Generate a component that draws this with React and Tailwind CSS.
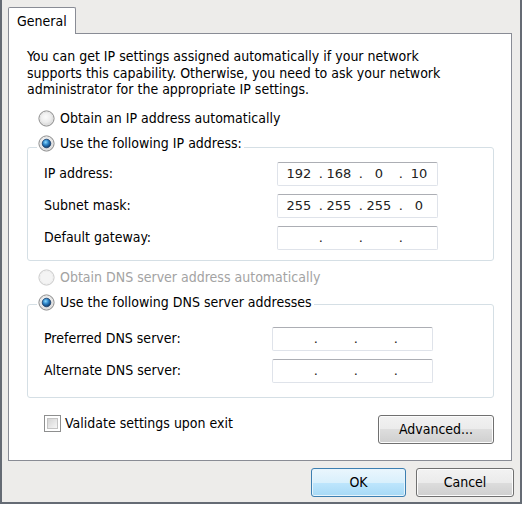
import React from "react";

const font = { fontFamily: '"DejaVu Sans Condensed", "DejaVu Sans", Tahoma, sans-serif' };

const Radio = ({ checked, disabled }) => (
  <svg width="17" height="17" viewBox="0 0 17 17" className="shrink-0">
    <defs>
      <radialGradient id="radioFill" cx="0.45" cy="0.4" r="0.6">
        <stop offset="0" stopColor="#fbfbfb" />
        <stop offset="0.6" stopColor="#ececec" />
        <stop offset="1" stopColor="#cfcfcf" />
      </radialGradient>
      <radialGradient id="radioDot" cx="0.4" cy="0.35" r="0.7">
        <stop offset="0" stopColor="#8fdcff" />
        <stop offset="0.45" stopColor="#2c84c8" />
        <stop offset="1" stopColor="#0b2f5c" />
      </radialGradient>
    </defs>
    <circle cx="8.5" cy="8.5" r="7.6" fill={disabled ? "#f4f4f4" : "url(#radioFill)"} stroke={disabled ? "#c9c9c9" : "#8c8c8c"} strokeWidth="1" />
    <circle cx="8.5" cy="8.5" r="6.4" fill="none" stroke={disabled ? "#ececec" : "#e2e2e2"} strokeWidth="0.8" />
    {checked && <circle cx="8.5" cy="8.5" r="4.3" fill="url(#radioDot)" stroke="#163a66" strokeWidth="0.8" />}
  </svg>
);

// IP address control: four centred octets with dots between them
const IpBox = ({ parts = ["", "", "", ""] }) => (
  <div
    className="w-[161px] h-[24px] bg-white border border-[#dfe3ea] border-t-[#acaeb4] rounded-[2px] flex items-center pl-[5px] text-[13px] text-[#222]"
    style={{ fontFamily: '"DejaVu Sans", sans-serif' }}
  >
    {parts.map((p, i) => (
      <React.Fragment key={i}>
        <span className="w-[32px] text-center">{p}</span>
        {i < 3 && <span className="w-[8px] text-right">.</span>}
      </React.Fragment>
    ))}
  </div>
);

const Field = ({ label, parts, labelWidth }) => (
  <div className="flex items-center h-[24px]">
    <span className={labelWidth}>{label}</span>
    <IpBox parts={parts} />
  </div>
);

const Button = ({ children, primary, className = "" }) => (
  <button
    className={`h-[29px] rounded-[3px] border text-[14px] text-black ${
      primary
        ? "border-[#3c7fb1] bg-[linear-gradient(#eaf6fd_0%,#d9f0fc_50%,#bee6fd_50%,#a7d9f5_100%)] shadow-[inset_0_0_0_1px_#e7f4fc]"
        : "border-[#707070] bg-[linear-gradient(#f2f2f2_0%,#ebebeb_50%,#dddddd_50%,#cfcfcf_100%)] shadow-[inset_0_0_0_1px_#fcfcfc]"
    } ${className}`}
  >
    {children}
  </button>
);

export default function App() {
  return (
    <div className="w-[522px] h-[505px] bg-white" style={font}>
      <div className="w-[522px] h-[504px] bg-[#edecea] border-l-2 border-r-2 border-b-2 border-[#656b74] flex flex-col text-[14px] text-black">
        {/* tab strip */}
        <div className="h-[33px] pt-[7px] pl-[6px] flex">
          <div className="relative z-10 w-[68px] h-[27px] bg-white border border-b-0 border-[#898c95] rounded-t-[2px] pl-[8px] pt-[4px] leading-[18px]">
            General
          </div>
        </div>

        {/* panel */}
        <div className="ml-[6px] w-[504px] h-[428px] bg-white border border-[#898c95] pl-[18px] flex flex-col">
          <p className="mt-[14px] leading-[16.5px] whitespace-nowrap">
            You can get IP settings assigned automatically if your network
            <br />
            supports this capability. Otherwise, you need to ask your network
            <br />
            administrator for the appropriate IP settings.
          </p>

          <div className="mt-[11px] h-[20px] flex items-center gap-[5px] pl-[11px]">
            <Radio />
            <span>Obtain an IP address automatically</span>
          </div>

          <div className="mt-[5px] h-[20px] flex pl-[10px] relative z-10">
            <div className="flex items-center gap-[5px] bg-white pl-[1px] pr-[2px]">
              <Radio checked />
              <span>Use the following IP address:</span>
            </div>
          </div>
          <div className="mt-[-7px] w-[467px] h-[114px] border border-[#d5dfe5] rounded-[3px] pl-[16px] pt-[14px] flex flex-col gap-[8px]">
            <Field label="IP address:" parts={["192", "168", "0", "10"]} labelWidth="w-[233px]" />
            <Field label="Subnet mask:" parts={["255", "255", "255", "0"]} labelWidth="w-[233px]" />
            <Field label="Default gateway:" labelWidth="w-[233px]" />
          </div>

          <div className="mt-[7px] h-[20px] flex items-center gap-[5px] pl-[11px] text-[#a3a3a3]">
            <Radio disabled />
            <span>Obtain DNS server address automatically</span>
          </div>

          <div className="mt-[5px] h-[20px] flex pl-[10px] relative z-10">
            <div className="flex items-center gap-[5px] bg-white pl-[1px] pr-[2px]">
              <Radio checked />
              <span>Use the following DNS server addresses</span>
            </div>
          </div>
          <div className="mt-[-9px] w-[467px] h-[94px] border border-[#d5dfe5] rounded-[3px] pl-[16px] pt-[22px] flex flex-col gap-[8px]">
            <Field label="Preferred DNS server:" labelWidth="w-[228px]" />
            <Field label="Alternate DNS server:" labelWidth="w-[228px]" />
          </div>

          <div className="mt-[17px] flex items-start">
            <div className="mt-[1px] ml-[17px] flex items-center gap-[4px] h-[16px]">
              <span className="w-[17px] h-[17px] border border-[#8e8f8f] bg-white p-[2px] flex">
                <span className="flex-1 border border-[#c4c4c4] bg-[linear-gradient(135deg,#d4d4d4,#f6f6f6)]" />
              </span>
              <span>Validate settings upon exit</span>
            </div>
            <Button className="ml-auto mr-[17px] w-[116px] h-[28px]">Advanced...</Button>
          </div>
        </div>

        {/* dialog buttons */}
        <div className="mt-[7px] flex justify-end gap-[10px] pr-[6px]">
          <Button primary className="w-[95px]">OK</Button>
          <Button className="w-[98px]">Cancel</Button>
        </div>
      </div>
    </div>
  );
}
